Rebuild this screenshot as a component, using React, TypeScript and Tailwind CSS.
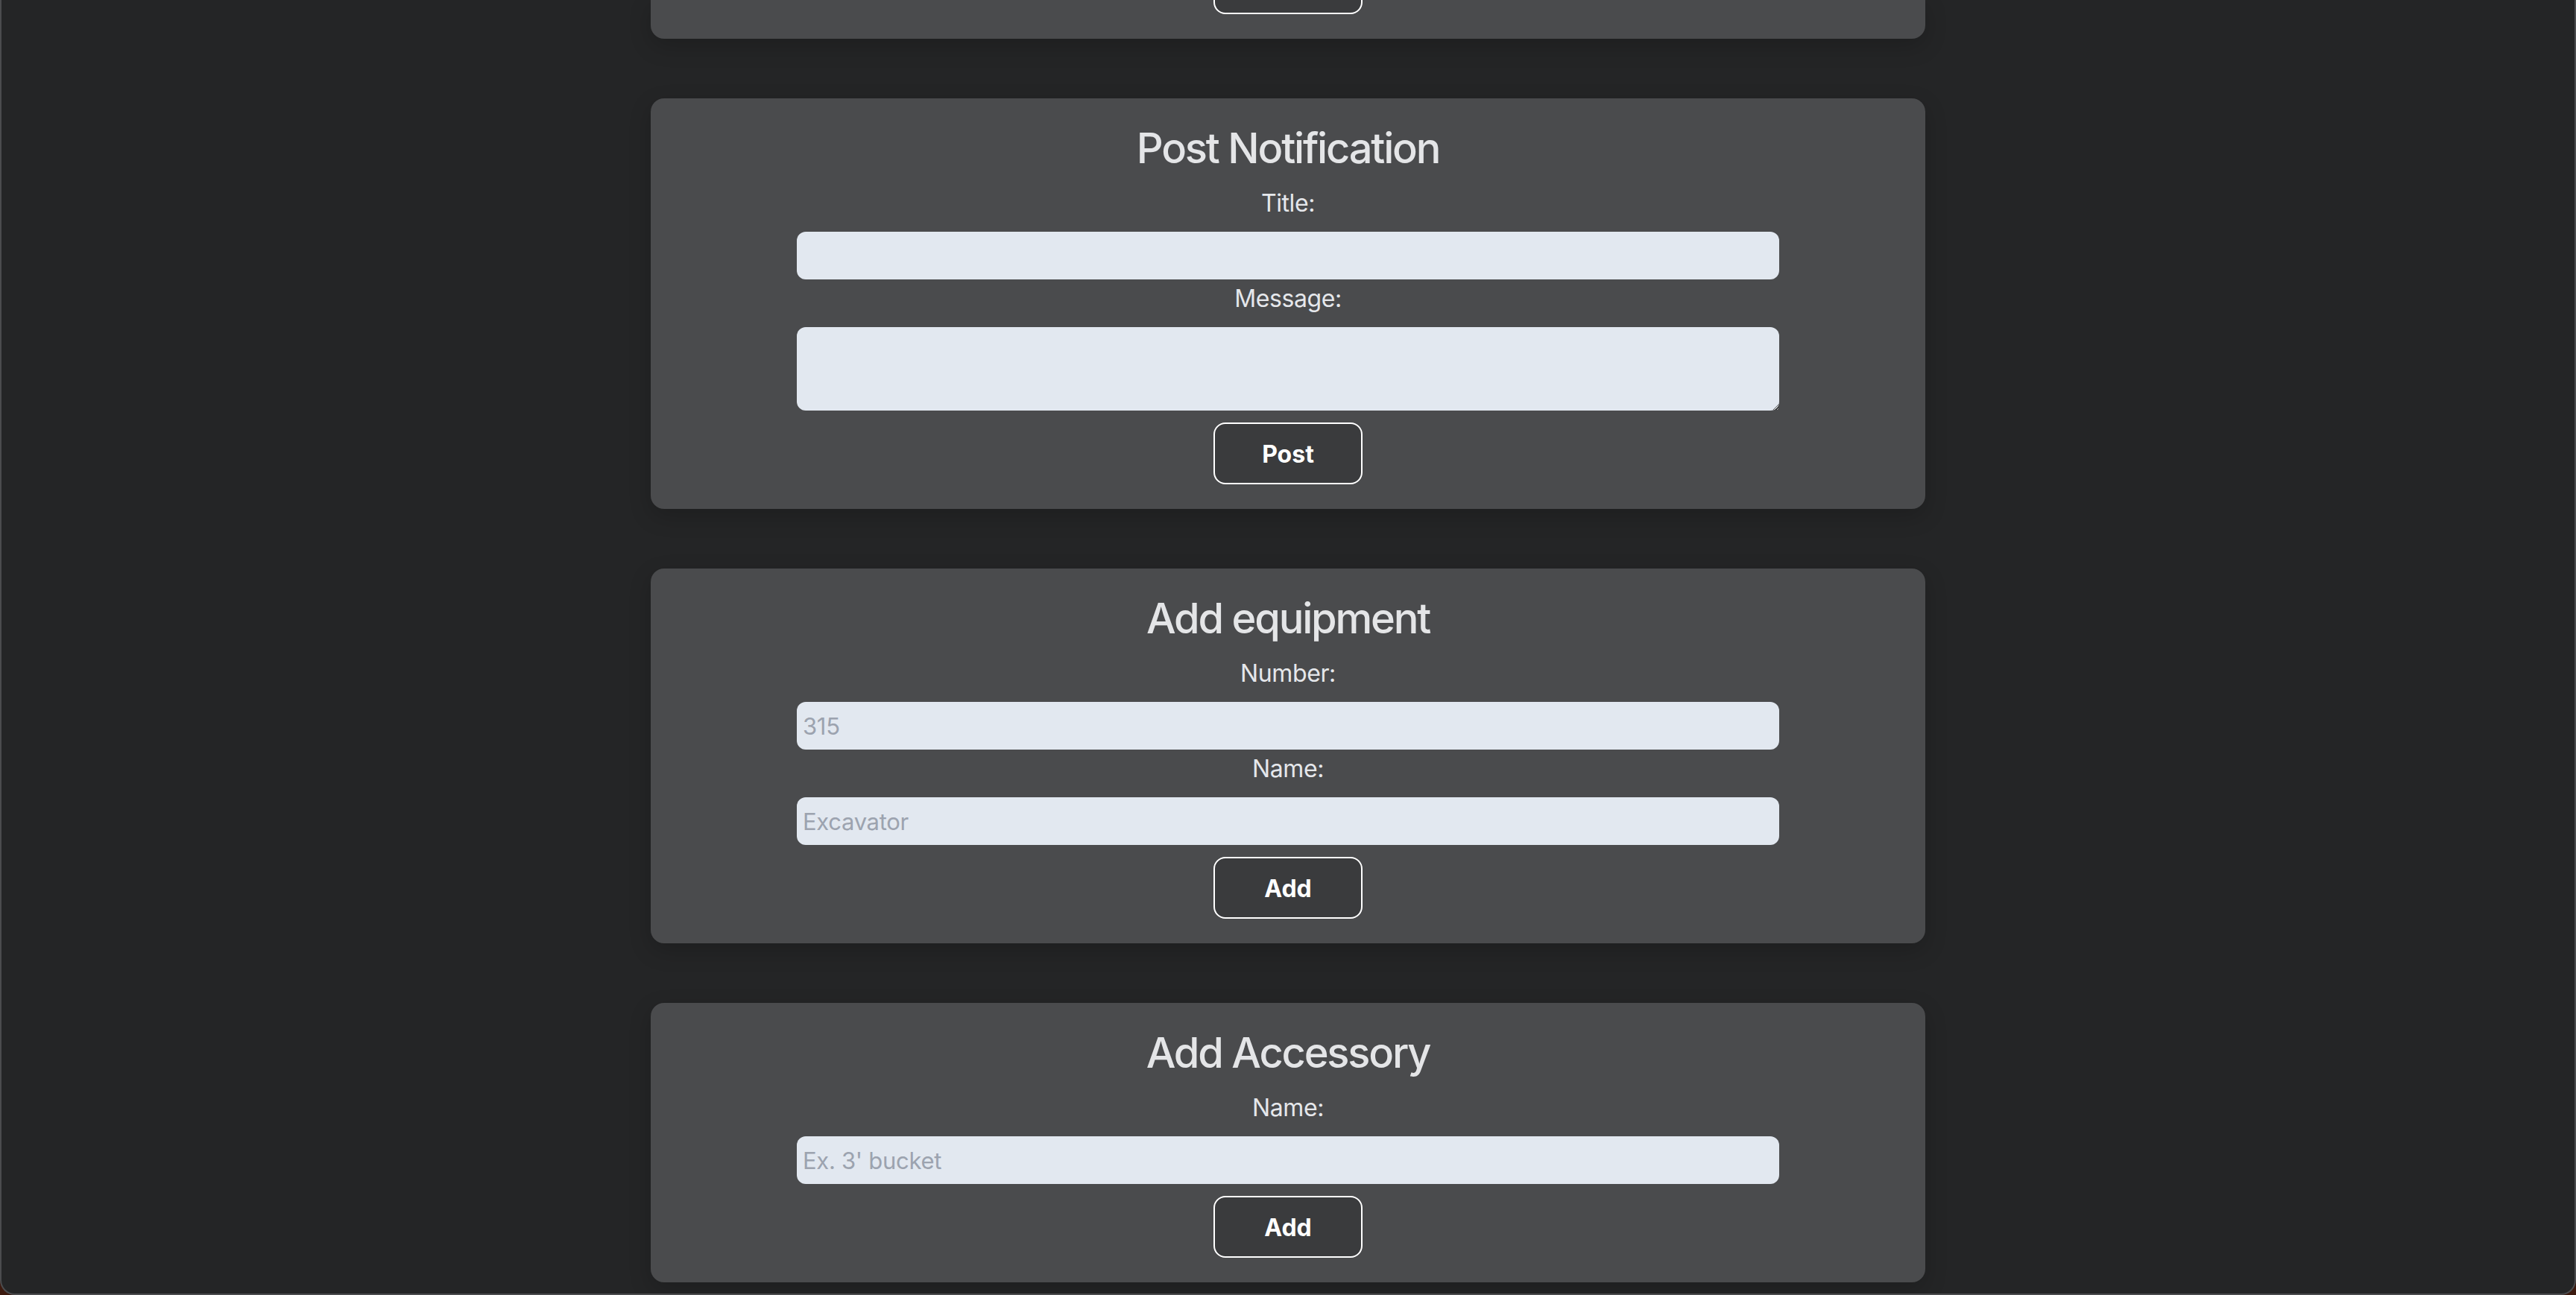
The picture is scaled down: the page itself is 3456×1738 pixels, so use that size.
import { useState } from 'react'

// admin panel – forms for notifications / equipment / accessories

const font = { fontFamily: 'Inter, "Noto Sans", sans-serif' }

function Card({ title, children }: { title: string; children: React.ReactNode }) {
  return (
    <div className="w-[1710px] shrink-0 bg-[#4a4b4d] rounded-[18px] pt-[25px] pb-[33px] flex flex-col items-center shadow-[0_10px_30px_rgba(0,0,0,0.18)]">
      <h2 className="text-[56px] leading-[84px] font-medium text-[#e4e5e7] tracking-[-2.2px] mb-[6px]">{title}</h2>
      {children}
    </div>
  )
}

function Label({ text }: { text: string }) {
  return <label className="block pt-[2px] text-[32px] leading-[48px] tracking-[-0.4px] text-[#e5e7eb] mb-[14px]">{text}</label>
}

function Field({ label, placeholder, value, onChange }: {
  label: string
  placeholder?: string
  value: string
  onChange: (v: string) => void
}) {
  return (
    <>
      <Label text={label} />
      <input
        value={value}
        onChange={e => onChange(e.target.value)}
        placeholder={placeholder}
        className="block w-[1318px] h-[64px] rounded-[12px] bg-[#e2e8f0] px-[8px] text-[31px] tracking-[-0.3px] text-[#1f2937] placeholder:text-[#9ca3af] outline-none"
      />
    </>
  )
}

function SubmitButton({ text }: { text: string }) {
  return (
    <button className="mt-[16px] w-[200px] h-[83px] shrink-0 rounded-[16px] border-2 border-white bg-[#3a3b3d] text-white text-[32px] font-bold pt-[2px]">
      {text}
    </button>
  )
}

export default function App() {
  const [title, setTitle] = useState('')
  const [message, setMessage] = useState('')
  const [number, setNumber] = useState('')
  const [name, setName] = useState('')
  const [accessory, setAccessory] = useState('')

  return (
    <div className="w-full h-[1738px] bg-[#3c1a0f]" style={font}>
      <div className="h-full bg-[#242526] border-x-2 border-b-2 border-[#4b4c4e] rounded-b-[20px] overflow-hidden">
        <div className="flex flex-col items-center gap-[80px]">

          {/* previous card, scrolled mostly out of view */}
          <div className="w-[1710px] h-[52px] shrink-0 bg-[#4a4b4d] rounded-b-[18px] pb-[33px] overflow-hidden flex flex-col justify-end items-center shadow-[0_10px_30px_rgba(0,0,0,0.18)]">
            <div className="w-[200px] h-[83px] shrink-0 rounded-[16px] border-2 border-white bg-[#3a3b3d]" />
          </div>

          <Card title="Post Notification">
            <Field label="Title:" value={title} onChange={setTitle} />
            <Label text="Message:" />
            <textarea
              value={message}
              onChange={e => setMessage(e.target.value)}
              className="block w-[1318px] h-[112px] rounded-[12px] bg-[#e2e8f0] px-[8px] py-[6px] text-[31px] text-[#1f2937] outline-none resize"
            />
            <SubmitButton text="Post" />
          </Card>

          <Card title="Add equipment">
            <Field label="Number:" placeholder="315" value={number} onChange={setNumber} />
            <Field label="Name:" placeholder="Excavator" value={name} onChange={setName} />
            <SubmitButton text="Add" />
          </Card>

          <Card title="Add Accessory">
            <Field label="Name:" placeholder="Ex. 3' bucket" value={accessory} onChange={setAccessory} />
            <SubmitButton text="Add" />
          </Card>
        </div>
      </div>
    </div>
  )
}
